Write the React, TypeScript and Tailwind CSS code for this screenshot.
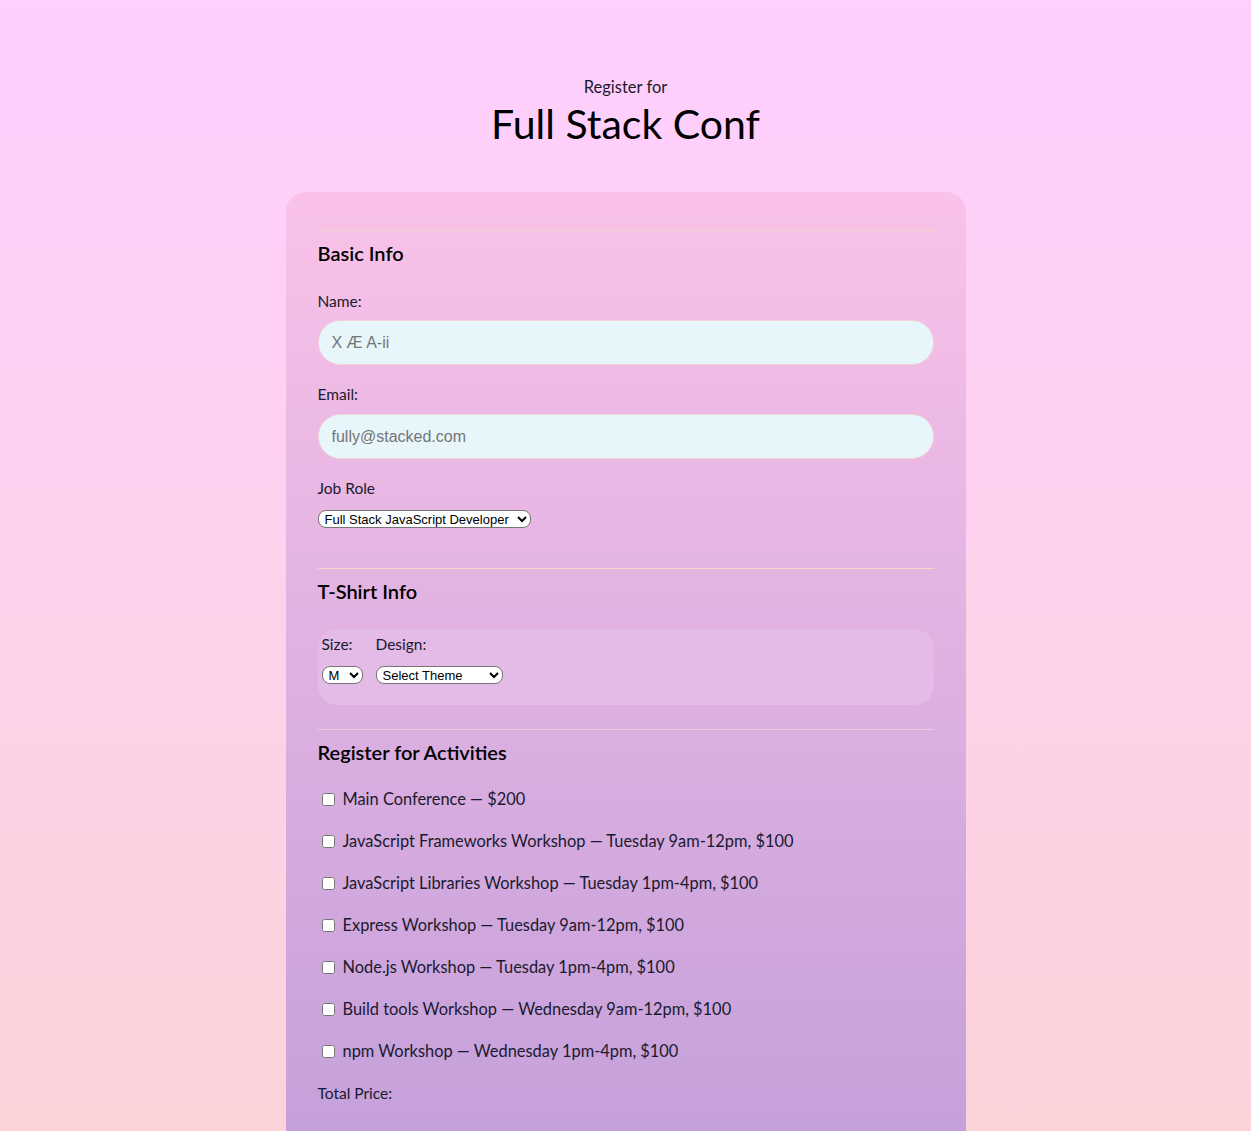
import React from 'react';

const activities = [
  'Main Conference — $200',
  'JavaScript Frameworks Workshop — Tuesday 9am-12pm, $100',
  'JavaScript Libraries Workshop — Tuesday 1pm-4pm, $100',
  'Express Workshop — Tuesday 9am-12pm, $100',
  'Node.js Workshop — Tuesday 1pm-4pm, $100',
  'Build tools Workshop — Wednesday 9am-12pm, $100',
  'npm Workshop — Wednesday 1pm-4pm, $100',
];

const App: React.FC = () => {
  return (
    <div className="min-h-[1131px] bg-gradient-to-b from-[#ffcfff] to-[#fcd3d8] font-['Lato',sans-serif] text-[#1a1a2e] overflow-hidden">
      <header className="pt-[77px] text-center">
        <p className="text-[16.5px] leading-5">Register for</p>
        <h1 className="mt-[3px] text-[41px] leading-[48px] text-black">Full Stack Conf</h1>
      </header>

      <form className="mx-auto mt-[44px] w-[680px] rounded-t-[20px] bg-gradient-to-b from-[#fac2e8] to-[#c39fda] px-8 pt-[38px] pb-[60px]">
        <fieldset className="border-t border-[#f6d6c8]">
          <h2 className="mt-[10px] text-[20px] leading-6 font-semibold text-black">Basic Info</h2>

          <label className="mt-[26px] block text-[15.5px] leading-5">Name:</label>
          <input
            type="text"
            placeholder="X Æ A-ii"
            className="mt-[9px] block h-[45px] w-full rounded-[22px] border border-[#f3d2d8] bg-[#e6f6fb] px-[13px] font-['Liberation_Sans',sans-serif] text-[16px] placeholder:text-[#757575]"
          />

          <label className="mt-[19px] block text-[15.5px] leading-5">Email:</label>
          <input
            type="email"
            placeholder="fully@stacked.com"
            className="mt-[10px] block h-[45px] w-full rounded-[22px] border border-[#f3d2d8] bg-[#e6f6fb] px-[13px] font-['Liberation_Sans',sans-serif] text-[16px] placeholder:text-[#757575]"
          />

          <label className="mt-[19px] block text-[15.5px] leading-5">Job Role</label>
          <select className="mt-[12px] block h-[18px] w-[213px] rounded-[8px] border border-[#767676] bg-white px-[2px] font-['Liberation_Sans',sans-serif] text-[13px] leading-4 text-black appearance-auto">
            <option>Full Stack JavaScript Developer</option>
          </select>
        </fieldset>

        <fieldset className="mt-[40px] border-t border-[#f6d6c8]">
          <h2 className="mt-[10px] text-[20px] leading-6 font-semibold text-black">T-Shirt Info</h2>

          <div className="mt-[26px] flex gap-[13px] rounded-[20px] bg-[#e3bbe6] px-[4px] pt-[5px] pb-[21px]">
            <div>
              <label className="block text-[15.5px] leading-5">Size:</label>
              <select className="mt-[12px] block h-[18px] w-[41px] rounded-[8px] border border-[#767676] bg-white px-[2px] font-['Liberation_Sans',sans-serif] text-[13px] leading-4 text-black appearance-auto">
                <option>M</option>
              </select>
            </div>
            <div>
              <label className="block text-[15.5px] leading-5">Design:</label>
              <select className="mt-[12px] block h-[18px] w-[127px] rounded-[8px] border border-[#767676] bg-white px-[2px] font-['Liberation_Sans',sans-serif] text-[13px] leading-4 text-black appearance-auto">
                <option>Select Theme</option>
              </select>
            </div>
          </div>
        </fieldset>

        <fieldset className="mt-[24px] border-t border-[#f0c9d6]">
          <h2 className="mt-[10px] text-[20px] leading-6 font-semibold text-black">Register for Activities</h2>

          <div className="mt-[25px] flex flex-col gap-[22px]">
            {activities.map((a) => (
              <label key={a} className="flex items-center text-[16.4px] leading-5">
                <input type="checkbox" className="ml-[4px] mr-[8px] h-[13px] w-[13px]" />
                {a}
              </label>
            ))}
          </div>

          <p className="mt-[22px] text-[15.5px] leading-5">Total Price:</p>
        </fieldset>
      </form>
    </div>
  );
};

export default App;
